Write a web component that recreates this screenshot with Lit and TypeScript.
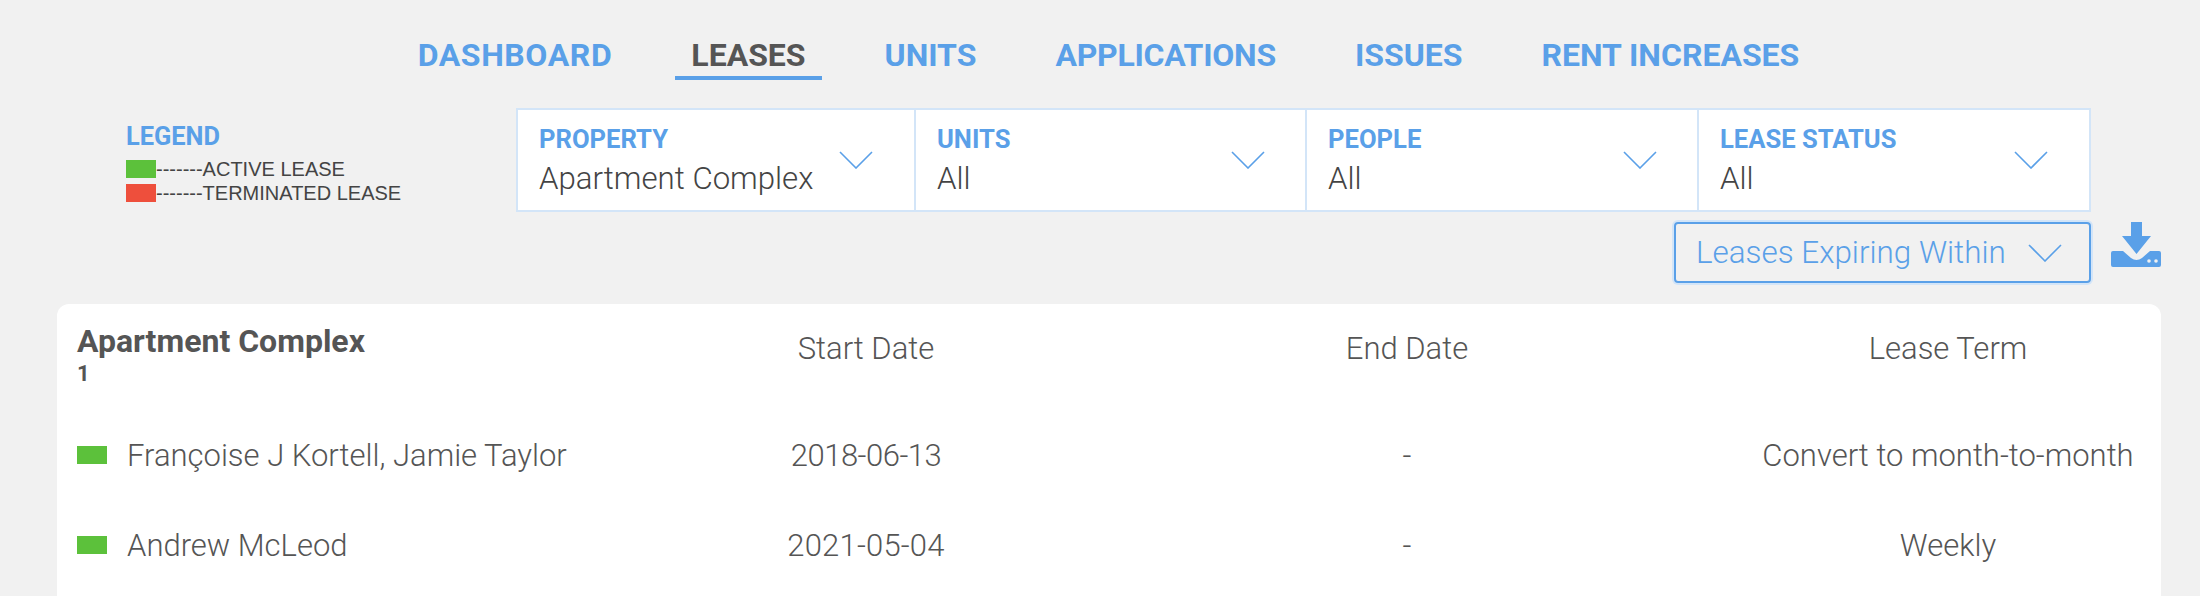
import { LitElement, html, css } from "lit";
import { customElement } from "lit/decorators.js";

const chevron = html`<svg class="chev" viewBox="0 0 34 18" width="34" height="18"><path d="M1 1 L17 17 L33 1" fill="none" stroke="#5aa0e8" stroke-width="1.6"/></svg>`;

@customElement("app-root")
export class AppRoot extends LitElement {
  static styles = css`
    :host { display: block; height: 596px; overflow: hidden; background: #f1f1f1; font-family: Roboto, "Open Sans", sans-serif; color: #555; }
    .nav { display: flex; justify-content: center; padding: 36px 0 0 0; margin-left: 17px; gap: 47px; height: 72px; box-sizing: content-box; }
    .nav a { display: block; height: 40px; padding: 0 16px; font-size: 32px; line-height: 38px; font-weight: 700; color: #5aa0e8; border-bottom: 4px solid transparent; white-space: nowrap; }
    .nav a.active { color: #555; border-bottom-color: #5aa0e8; }
    .nav a.wide { letter-spacing: 0.6px; }
    .nav a.narrow { letter-spacing: -0.25px; }
    .filters-row { display: flex; padding-left: 126px; align-items: flex-start; }
    .legend { width: 390px; flex: none; padding-top: 14px; }
    .legend h4 { margin: 0 0 7px; font-size: 25.4px; line-height: 28px; font-weight: 700; color: #5aa0e8; }
    .legend-row { display: flex; align-items: center; height: 24px; font-family: "Liberation Sans", sans-serif; font-size: 20px; color: #444; white-space: nowrap; }
    .swatch { width: 30px; height: 18px; flex: none; }
    .green { background: #5cc13b; }
    .red { background: #ee4f3c; }
    .filters { display: flex; width: 1575px; height: 104px; box-sizing: border-box; border: 2px solid #d3e5f8; background: #fff; }
    .filter { display: flex; align-items: center; justify-content: space-between; box-sizing: border-box; padding: 0 41px 0 21px; border-left: 2px solid #d3e5f8; }
    .filter:first-child { border-left: none; width: 396px; padding-right: 41px; }
    .f2 { width: 391px; padding-right: 40px; }
    .f3 { width: 392px; padding-right: 40px; }
    .f4 { flex: 1; }
    .text { padding-top: 2px; }
    .label { font-size: 25.6px; line-height: 28px; font-weight: 700; color: #5aa0e8; white-space: nowrap; }
    .value { font-size: 31.2px; line-height: 36px; font-weight: 300; color: #444; margin-top: 8px; white-space: nowrap; }
    .chev { display: block; flex: none; }
    .actions { display: flex; justify-content: flex-end; align-items: flex-start; padding: 10px 39px 0 0; gap: 20px; }
    .expiring { display: flex; align-items: center; justify-content: space-between; width: 417px; height: 61px; box-sizing: border-box; padding: 0 27px 0 20px; border: 2px solid #5aa0e8; border-radius: 4px; box-shadow: 0 0 0 2px #d3e5f8; font-size: 31.4px; font-weight: 300; color: #5aa0e8; white-space: nowrap; }
    .download { display: block; flex: none; }
    .card { margin: 21px 39px 0 57px; background: #fff; border-radius: 12px 12px 0 0; padding: 20px 20px 0; height: 400px; box-sizing: border-box; }
    .row { display: grid; grid-template-columns: 597px 384px 698px 384px; align-items: center; font-size: 31px; font-weight: 300; color: #555; text-align: center; }
    .head { height: 86px; align-items: start; }
    .head .c { padding-top: 7px; line-height: 36px; }
    .body { height: 90px; }
    .tight { letter-spacing: -0.5px; }
    .loose { letter-spacing: 0.2px; }
    .name { display: flex; align-items: center; gap: 20px; text-align: left; }
    .group { text-align: left; }
    .group b { display: block; font-size: 32px; line-height: 34px; font-weight: 700; color: #555; }
    .group span { display: block; font-size: 22px; line-height: 24px; font-weight: 700; margin-top: 4px; }
  `;

  render() {
    const navs = [["DASHBOARD", "wide"], ["LEASES", "active"], ["UNITS", ""], ["APPLICATIONS", "narrow"], ["ISSUES", ""], ["RENT INCREASES", ""]];
    const filters = [["PROPERTY", "Apartment Complex", ""], ["UNITS", "All", "f2"], ["PEOPLE", "All", "f3"], ["LEASE STATUS", "All", "f4"]];
    const rows = [["Françoise J Kortell, Jamie Taylor", "2018-06-13", "-", "Convert to month-to-month", "tight"], ["Andrew McLeod", "2021-05-04", "-", "Weekly", "loose"]];
    return html`
      <nav class="nav">${navs.map(([n, c]) => html`<a class=${c}>${n}</a>`)}</nav>
      <div class="filters-row">
        <div class="legend">
          <h4>LEGEND</h4>
          <div class="legend-row"><span class="swatch green"></span>-------ACTIVE LEASE</div>
          <div class="legend-row"><span class="swatch red"></span>-------TERMINATED LEASE</div>
        </div>
        <div class="filters">
          ${filters.map(([l, v, c]) => html`<div class="filter ${c}"><div class="text"><div class="label">${l}</div><div class="value">${v}</div></div>${chevron}</div>`)}
        </div>
      </div>
      <div class="actions">
        <div class="expiring"><span>Leases Expiring Within</span>${chevron}</div>
        <svg class="download" viewBox="0 0 50 46" width="50" height="46">
          <path fill="#5aa0e8" d="M20 0H31V14H40L25.5 32L11 14H20Z"/>
          <path fill="#5aa0e8" d="M2 29H12L20 36Q25.5 40 31 36L39 29H48A2 2 0 0 1 50 31V43A2 2 0 0 1 48 45H2A2 2 0 0 1 0 43V31A2 2 0 0 1 2 29Z"/>
          <circle cx="38" cy="39" r="1.8" fill="#f1f1f1"/><circle cx="45" cy="39" r="1.8" fill="#f1f1f1"/>
        </svg>
      </div>
      <div class="card">
        <div class="row head">
          <div class="group"><b>Apartment Complex</b><span>1</span></div>
          <div class="c">Start Date</div><div class="c">End Date</div><div class="c">Lease Term</div>
        </div>
        ${rows.map(([n, s, e, t, d]) => html`<div class="row body"><div class="name"><span class="swatch green"></span>${n}</div><div class=${d}>${s}</div><div>${e}</div><div>${t}</div></div>`)}
      </div>
    `;
  }
}
